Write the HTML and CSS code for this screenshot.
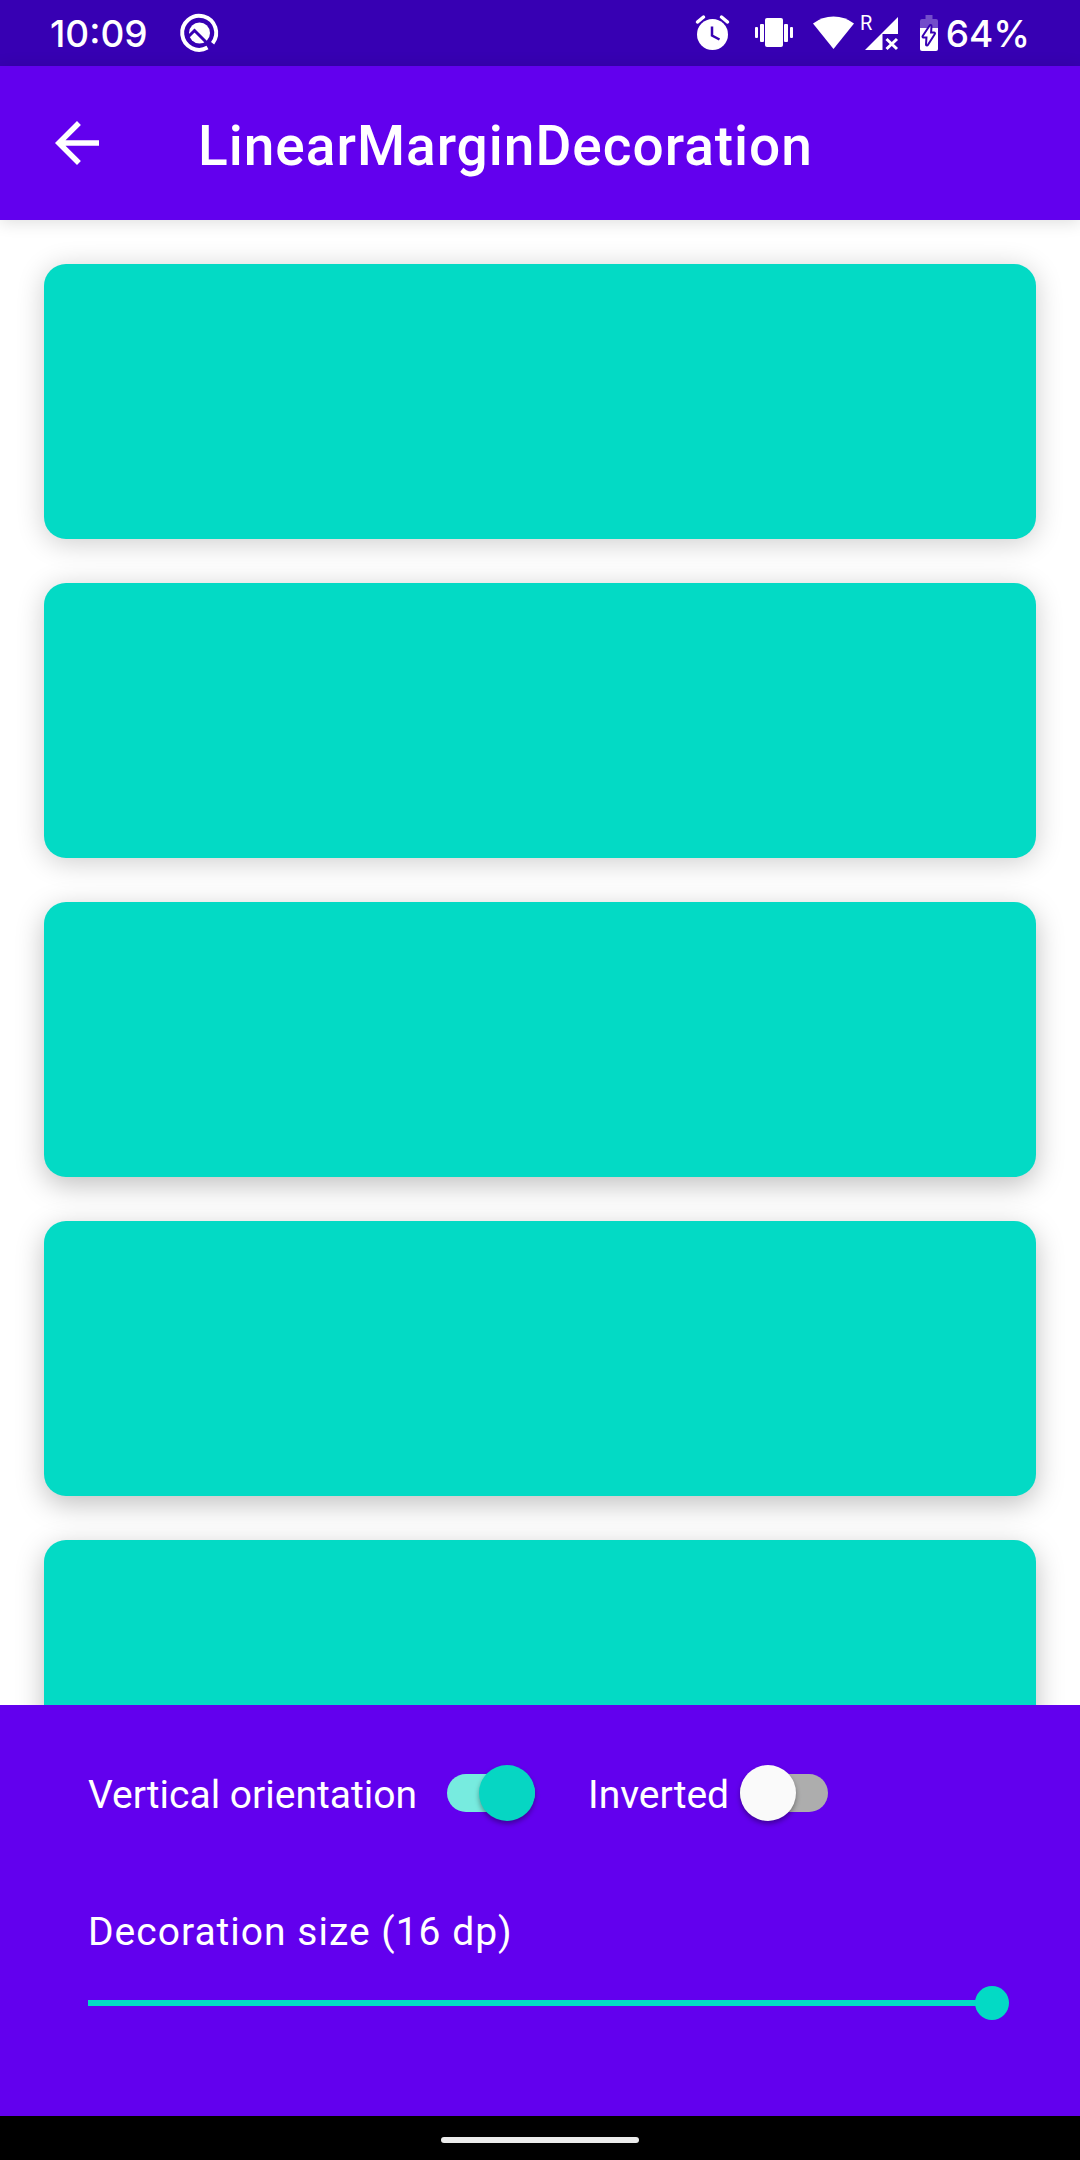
FILE: index.html
```html
<!DOCTYPE html>
<html lang="en">
<head>
<meta charset="utf-8">
<meta name="viewport" content="width=device-width, initial-scale=1">
<title>LinearMarginDecoration</title>
<link rel="stylesheet" href="styles.css">
</head>
<body>
<div class="status-bar">
  <span class="status-text">10:09</span>
  <svg class="q-icon" width="38" height="38" viewBox="0 0 38 38" aria-hidden="true">
    <path d="M27.5 33.6A17 17 0 1 1 32.6 29.2" fill="none" stroke="#fff" stroke-width="4"/>
    <circle cx="19.5" cy="19" r="10.5" fill="#fff"/>
    <path d="M8 23L14.500 16.500L32 34" fill="none" stroke="#3700b3" stroke-width="3"/>
  </svg>
  <div class="status-icons">
    <svg width="34" height="36" viewBox="0 0 34 36" aria-hidden="true">
      <circle cx="16.500" cy="19.500" r="15.500" fill="#fff"/>
      <path d="M1.500 7L7.500 2M25.500 2L31.500 7" stroke="#fff" stroke-width="3.500" stroke-linecap="round"/>
      <path d="M16 11.500V20.500L23.500 24.500" fill="none" stroke="#3700b3" stroke-width="2.500"/>
    </svg>
    <svg class="vibrate" width="38" height="30" viewBox="0 0 38 30" aria-hidden="true">
      <g fill="#fff">
        <rect x="10" y="0" width="18" height="29" rx="2"/>
        <rect x="0" y="9" width="3" height="11" rx="1"/>
        <rect x="5" y="6" width="4" height="18" rx="1"/>
        <rect x="29" y="6" width="4" height="18" rx="1"/>
        <rect x="35" y="9" width="3" height="11" rx="1"/>
      </g>
    </svg>
    <svg width="42" height="34" viewBox="0 0 42 34" aria-hidden="true">
      <path d="M0 7.500Q9 .500 20.500 .500T41 7.500L20.500 33Z" fill="#fff"/>
    </svg>
    <svg class="signal" width="37" height="38" viewBox="0 0 37 38" aria-hidden="true">
      <text class="roaming" x="-2" y="16">R</text>
      <path d="M3 36L36 3V20H20.500V36Z" fill="#fff"/>
      <path d="M24.500 25L35 35M35 25L24.500 35" stroke="#fff" stroke-width="3"/>
    </svg>
    <svg class="battery" width="18" height="36" viewBox="0 0 18 36" aria-hidden="true">
      <path d="M0 6Q0 4 2 4H5.500V0H12.500V4H16Q18 4 18 6V13H0Z" fill="#fff" fill-opacity=".3"/>
      <path d="M0 13H18V34Q18 36 16 36H2Q0 36 0 34Z" fill="#fff"/>
      <path d="M10.500 11L3.500 21.500H7.500L7 29.500L14 18.500H10Z" fill="#fff" stroke="#3700b3" stroke-width="4" stroke-linejoin="round" paint-order="stroke"/>
    </svg>
    <span class="status-text">64%</span>
  </div>
</div>
<header class="app-bar">
  <button class="back" type="button" aria-label="Back">
    <svg width="66" height="66" viewBox="0 0 24 24" aria-hidden="true"><path fill="#fff" d="M20 11H7.830l5.590-5.590L12 4l-8 8 8 8 1.410-1.410L7.830 13H20v-2z"/></svg>
  </button>
  <h1 class="title">LinearMarginDecoration</h1>
</header>
<main class="list">
  <div class="card"></div>
  <div class="card"></div>
  <div class="card"></div>
  <div class="card"></div>
  <div class="card"></div>
</main>
<section class="panel">
  <div class="switches">
    <label class="option option-wide"><span class="option-text">Vertical orientation</span> <input class="switch" type="checkbox" role="switch" checked></label>
    <label class="option"><span class="option-text">Inverted</span> <input class="switch" type="checkbox" role="switch"></label>
  </div>
  <label class="size-label" for="size">Decoration size (16 dp)</label>
  <input class="slider" id="size" type="range" min="0" max="16" value="16">
</section>
<div class="nav-bar"><div class="handle"></div></div>
</body>
</html>
```
FILE: styles.css
```css
* {
  box-sizing: border-box;
}

body {
  margin: 0;
  height: 100vh;
  display: flex;
  flex-direction: column;
  background: #fff;
  color: #fff;
  font-family: Roboto, "Liberation Sans", sans-serif;
  font-size: 39px;
  overflow: hidden;
}

svg {
  display: block;
  flex: none;
  overflow: visible;
}

.status-bar {
  flex: none;
  display: flex;
  align-items: center;
  height: 66px;
  padding: 0 50px;
  background: #3700b3;
}

.status-text {
  padding-top: 2px;
  font-family: Inter, sans-serif;
  font-size: 37px;
  font-weight: 500;
  line-height: 64px;
}

.q-icon {
  margin-left: 32px;
}

.status-icons {
  display: flex;
  align-items: center;
  margin-left: auto;
}

.vibrate {
  margin: 0 20px 0 25px;
}

.signal {
  margin-left: 7px;
}

.roaming {
  fill: #fff;
  font-size: 20px;
}

.battery {
  margin: 0 8px 0 21px;
}

.app-bar {
  flex: none;
  display: flex;
  align-items: center;
  height: 154px;
  padding: 0 44px;
  background: #6200ee;
  box-shadow: 0 2px 16px rgba(0, 0, 0, .14);
}

.back {
  border: 0;
  padding: 0;
  background: none;
}

.title {
  margin: 0;
  padding: 6px 0 0 88px;
  font-size: 55px;
  font-weight: 500;
  line-height: 66px;
  letter-spacing: 1px;
}

.list {
  flex: 1;
  min-height: 0;
  display: flex;
  flex-direction: column;
  gap: 44px;
  padding: 44px 44px 0;
  overflow: hidden;
}

.card {
  flex: none;
  height: 275px;
  border-radius: 22px;
  background: #03dac5;
  box-shadow: 0 4px 28px rgba(0, 0, 0, .2);
}

.card:nth-child(n + 3) {
  box-shadow: 0 8px 28px rgba(0, 0, 0, .25);
}

.panel {
  flex: none;
  display: flex;
  flex-direction: column;
  padding: 60px 71px 96px 88px;
  background: #6200ee;
}

.switches {
  display: flex;
  gap: 53px;
}

.option {
  display: flex;
  align-items: center;
  gap: 11px;
}

.option-wide {
  gap: 30px;
}

.option-text {
  padding-top: 4px;
  line-height: 52px;
}

.switch {
  appearance: none;
  flex: none;
  display: grid;
  width: 88px;
  height: 56px;
  margin: 0;
}

.switch::before,
.switch::after {
  content: "";
  grid-area: 1 / 1;
  align-self: center;
}

.switch::before {
  height: 38px;
  border-radius: 19px;
  background: #adadad;
}

.switch::after {
  width: 56px;
  height: 56px;
  border-radius: 50%;
  background: #fafafa;
  box-shadow: 0 3px 5px rgba(0, 0, 0, .35);
}

.switch:checked::before {
  background: #77ebdf;
}

.switch:checked::after {
  justify-self: end;
  background: #06d6c3;
}

.size-label {
  margin-top: 83px;
  line-height: 56px;
  letter-spacing: 1px;
}

.slider {
  appearance: none;
  width: 100%;
  height: 34px;
  margin: 26px 0 0;
  background: linear-gradient(#03dac5, #03dac5) left / calc(100% - 17px) 6px no-repeat;
}

.slider::-webkit-slider-thumb {
  appearance: none;
  width: 34px;
  height: 34px;
  border-radius: 50%;
  background: #03dac5;
}

.nav-bar {
  flex: none;
  display: flex;
  align-items: center;
  justify-content: center;
  height: 44px;
  padding-top: 4px;
  background: #000;
}

.handle {
  width: 198px;
  height: 6px;
  border-radius: 3px;
  background: #ececec;
}
```
